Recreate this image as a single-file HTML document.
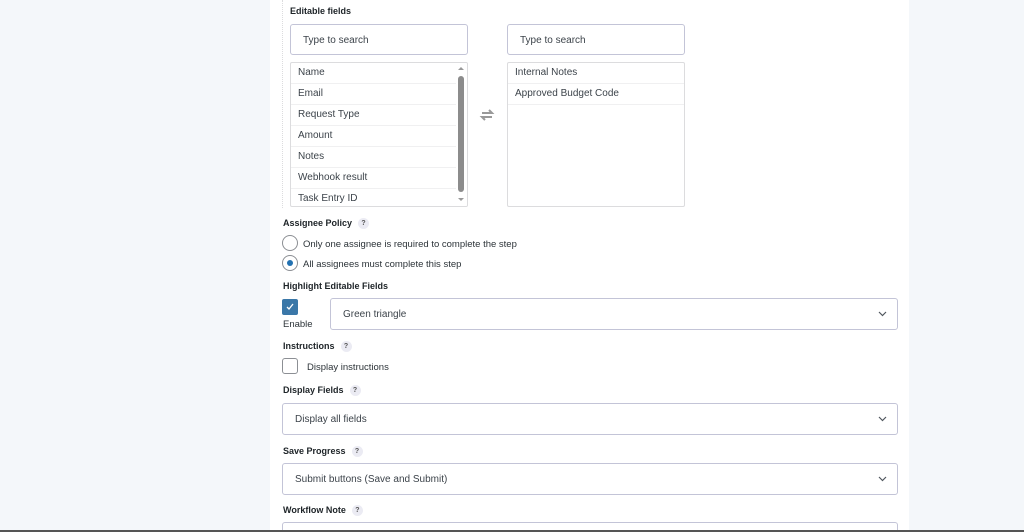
<!DOCTYPE html>
<html><head><meta charset="utf-8"><style>
*{box-sizing:border-box;margin:0;padding:0}
html{overflow:hidden;height:532px}
body{width:1024px;height:532px;overflow:hidden;background:#f4f7fa;font-family:"Liberation Sans",sans-serif;color:#3c434a;position:relative}
.panel{position:absolute;left:270px;top:0;width:639px;height:532px;background:#fff}
.abs{position:absolute}
.lbl{position:absolute;font-size:9px;font-weight:bold;color:#1d2327}
.q{display:inline-block;width:11px;height:11px;border-radius:50%;background:#ebebf3;font-size:7px;text-align:center;line-height:11px;margin-left:6px;color:#555;vertical-align:1px}
.inp{position:absolute;border:1px solid #c3c4d7;border-radius:3px;background:#fff;font-size:10px;color:#3c434a}
.list{position:absolute;border:1px solid #dcdcde;border-radius:2px;background:#fff;overflow:hidden}
.item{height:21px;line-height:20px;padding-left:7px;font-size:10px;border-bottom:1px solid #f0f0f1;color:#3c434a}
.sel{padding-left:12px;line-height:31px}
.chev{position:absolute;right:10px;top:50%;margin-top:-3px}
.t{position:absolute;font-size:9.5px;color:#2c3338}
</style></head><body>
<div class="panel"></div>
<div class="abs" style="left:282px;top:0;height:208px;border-left:1px dotted #dcdcde"></div>
<div class="lbl" style="left:290px;top:6px">Editable fields</div>
<div class="inp" style="left:290px;top:24px;width:178px;height:31px;padding-left:12px;line-height:31px">Type to search</div>
<div class="inp" style="left:507px;top:24px;width:178px;height:31px;padding-left:12px;line-height:31px">Type to search</div>
<div class="list" style="left:290px;top:62px;width:178px;height:145px">
<div class="item">Name</div><div class="item">Email</div><div class="item">Request Type</div><div class="item">Amount</div><div class="item">Notes</div><div class="item">Webhook result</div><div class="item">Task Entry ID</div>
<div class="abs" style="right:0;top:0;width:11px;height:145px;background:#fff"></div>
<div class="abs" style="right:3px;top:4px;width:0;height:0;border-left:3px solid transparent;border-right:3px solid transparent;border-bottom:3px solid #999"></div>
<div class="abs" style="right:3px;top:13px;width:6px;height:116px;background:#8c8c8c;border-radius:3px"></div>
<div class="abs" style="right:3px;top:135px;width:0;height:0;border-left:3px solid transparent;border-right:3px solid transparent;border-top:3px solid #999"></div>
</div>
<svg class="abs" style="left:479px;top:109px" width="16" height="12" viewBox="0 0 16 12"><path d="M3 4h10l-3-3M13 8H3l3 3" stroke="#999" stroke-width="2" fill="none"/></svg>
<div class="list" style="left:507px;top:62px;width:178px;height:145px">
<div class="item">Internal Notes</div><div class="item">Approved Budget Code</div>
</div>

<div class="lbl" style="left:283px;top:218px">Assignee Policy<span class="q">?</span></div>
<div class="abs" style="left:282px;top:235px;width:16px;height:16px;border:1px solid #8c8f94;border-radius:50%"></div>
<div class="t" style="left:303px;top:239px">Only one assignee is required to complete the step</div>
<div class="abs" style="left:282px;top:255px;width:16px;height:16px;border:1px solid #8c8f94;border-radius:50%"></div>
<div class="abs" style="left:287px;top:260px;width:6px;height:6px;background:#2271b1;border-radius:50%"></div>
<div class="t" style="left:303px;top:259px">All assignees must complete this step</div>

<div class="lbl" style="left:283px;top:281px">Highlight Editable Fields</div>
<div class="abs" style="left:282px;top:299px;width:16px;height:16px;background:#3a77a8;border-radius:2px"></div>
<svg class="abs" style="left:285px;top:302px" width="10" height="10"><path d="M2 5l2 2 4-5" stroke="#fff" stroke-width="1.3" fill="none"/></svg>
<div class="t" style="left:283px;top:319px">Enable</div>
<div class="inp sel" style="left:330px;top:298px;width:568px;height:32px">Green triangle<svg class="chev" width="9" height="6"><path d="M1 1l3.5 3.5L8 1" stroke="#50575e" stroke-width="1.2" fill="none"/></svg></div>

<div class="lbl" style="left:283px;top:341px">Instructions<span class="q">?</span></div>
<div class="abs" style="left:282px;top:358px;width:16px;height:16px;border:1px solid #8c8f94;border-radius:3px"></div>
<div class="t" style="left:307px;top:362px">Display instructions</div>

<div class="lbl" style="left:283px;top:385px">Display Fields<span class="q">?</span></div>
<div class="inp sel" style="left:282px;top:403px;width:616px;height:32px">Display all fields<svg class="chev" width="9" height="6"><path d="M1 1l3.5 3.5L8 1" stroke="#50575e" stroke-width="1.2" fill="none"/></svg></div>

<div class="lbl" style="left:283px;top:446px">Save Progress<span class="q">?</span></div>
<div class="inp sel" style="left:282px;top:463px;width:616px;height:32px">Submit buttons (Save and Submit)<svg class="chev" width="9" height="6"><path d="M1 1l3.5 3.5L8 1" stroke="#50575e" stroke-width="1.2" fill="none"/></svg></div>

<div class="lbl" style="left:283px;top:505px">Workflow Note<span class="q">?</span></div>
<div class="inp" style="left:282px;top:522px;width:616px;height:8px;border-bottom:none;border-radius:3px 3px 0 0"></div>
<div class="abs" style="left:0;top:530px;width:1024px;height:2px;background:#555"></div>
</body></html>
